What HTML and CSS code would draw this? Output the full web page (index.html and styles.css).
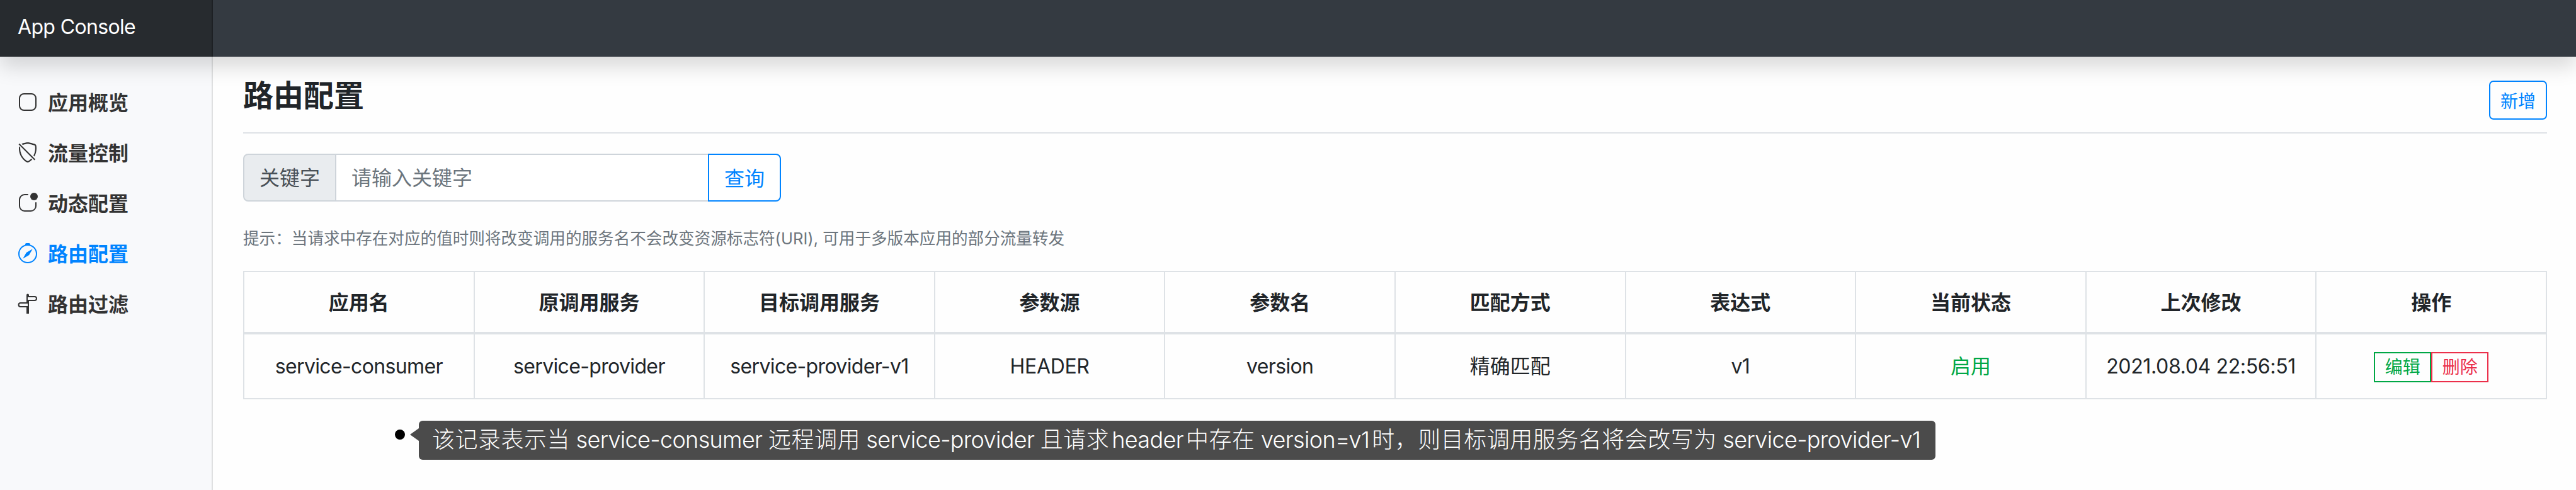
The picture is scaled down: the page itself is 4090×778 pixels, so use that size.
FILE: index.html
```html
<!DOCTYPE html>
<html lang="zh-CN">
<head>
<meta charset="utf-8">
<title>App Console</title>
<link rel="stylesheet" href="styles.css">
</head>
<body>
<header class="navbar"><a class="brand">App Console</a></header>
<div class="layout">
  <nav class="sidebar">
    <a class="nav-link"><svg class="icon" viewBox="0 0 16 16"><rect x="1.5" y="1.5" width="13" height="13" rx="3.5" fill="none" stroke="currentColor"/></svg><span>应用概览</span></a>
    <a class="nav-link"><svg class="icon" viewBox="0 0 16 16"><path d="M1.093 3.093c-.465 4.275.885 7.46 2.513 9.589a11.777 11.777 0 0 0 2.483 2.453c.386.273.744.482 1.048.625.28.132.581.24.829.24s.548-.108.829-.24a7.159 7.159 0 0 0 1.048-.625 11.32 11.32 0 0 0 1.733-1.525l-.745-.745a10.27 10.27 0 0 1-1.578 1.392c-.346.244-.652.42-.893.533-.12.057-.218.095-.293.118a.55.55 0 0 1-.101.025.615.615 0 0 1-.1-.025 2.348 2.348 0 0 1-.294-.118 6.141 6.141 0 0 1-.893-.533 10.725 10.725 0 0 1-2.287-2.233C3.053 10.228 1.879 7.594 2.06 4.06zM3.98 1.98l-.852-.852A58.935 58.935 0 0 1 5.072.559C6.157.266 7.31 0 8 0s1.843.265 2.928.56c1.11.3 2.229.655 2.887.87a1.54 1.54 0 0 1 1.044 1.262c.483 3.626-.332 6.491-1.551 8.616l-.77-.77c1.042-1.915 1.72-4.469 1.29-7.702a.48.48 0 0 0-.33-.39c-.65-.213-1.75-.56-2.836-.855C9.552 1.29 8.531 1.067 8 1.067c-.53 0-1.552.223-2.662.524A50.7 50.7 0 0 0 3.98 1.98z"/><path d="M13.35 14.2.75 1.6l.708-.708 12.6 12.6z"/></svg><span>流量控制</span></a>
    <a class="nav-link"><svg class="icon" viewBox="0 0 16 16"><path d="M5.5 2A3.5 3.5 0 0 0 2 5.5v5A3.5 3.5 0 0 0 5.5 14h5a3.5 3.5 0 0 0 3.5-3.5V8a.5.5 0 0 1 1 0v2.5a4.5 4.5 0 0 1-4.5 4.5h-5A4.5 4.5 0 0 1 1 10.5v-5A4.5 4.5 0 0 1 5.5 1H8a.5.5 0 0 1 0 1z"/><circle cx="13" cy="3" r="3"/></svg><span>动态配置</span></a>
    <a class="nav-link active"><svg class="icon" viewBox="0 0 16 16"><path d="M8 16.016a7.5 7.5 0 0 0 1.962-14.74A1 1 0 0 0 9 0H7a1 1 0 0 0-.962 1.276A7.5 7.5 0 0 0 8 16.016zm6.5-7.5a6.5 6.5 0 1 1-13 0 6.5 6.5 0 0 1 13 0z"/><path d="m6.94 7.44 4.95-2.83-2.83 4.95-4.949 2.83z"/></svg><span>路由配置</span></a>
    <a class="nav-link"><svg class="icon" viewBox="0 0 16 16"><path fill-rule="evenodd" d="M7 7V1.200a1 1 0 0 1 2 0V2h4.500a2 2 0 0 1 0 4H9v10H7v-5H2.300a2 2 0 0 1 0-4zM8 3v2h5.500a1 1 0 0 0 0-2zM8 8v2H2.300a1 1 0 0 1 0-2z"/></svg><span>路由过滤</span></a>
  </nav>
  <main class="content">
    <div class="page-head"><h1 class="title">路由配置</h1><button class="btn-new">新增</button></div>
    <div class="search"><span class="search-label">关键字</span><input class="search-input" placeholder="请输入关键字"><button class="search-btn">查询</button></div>
    <p class="hint">提示：当请求中存在对应的值时则将改变调用的服务名不会改变资源标志符(URI), 可用于多版本应用的部分流量转发</p>
    <table class="table">
      <thead><tr><th>应用名</th><th>原调用服务</th><th>目标调用服务</th><th>参数源</th><th>参数名</th><th>匹配方式</th><th>表达式</th><th>当前状态</th><th>上次修改</th><th>操作</th></tr></thead>
      <tbody><tr><td>service-consumer</td><td>service-provider</td><td>service-provider-v1</td><td class="wide">HEADER</td><td>version</td><td class="cjk">精确匹配</td><td>v1</td><td class="cjk enabled">启用</td><td class="wide">2021.08.04 22:56:51</td><td><div class="ops"><button class="op edit">编辑</button><button class="op remove">删除</button></div></td></tr></tbody>
    </table>
    <div class="note"><i class="dot"></i><i class="arrow"></i><div class="bubble">该记录表示当<span class="latin"> service-consumer </span>远程调用<span class="latin"> service-provider </span>且请求<span class="latin gap">header</span>中存在<span class="latin gap-end"> version=v1</span>时，则目标调用服务名将会改写为<span class="latin"> service-provider-v1</span></div></div>
  </main>
</div>
</body>
</html>
```
FILE: styles.css
```css
* { box-sizing: border-box; }
body { margin: 0; width: 4090px; height: 778px; overflow: hidden; background: #fefefe; color: #212529; font: 32px/48px Inter, "Noto Sans CJK SC", sans-serif; }
button, input { font-family: inherit; margin: 0; }
.navbar { position: relative; z-index: 2; height: 90px; background: #343a41; box-shadow: 0 16px 32px rgba(0,0,0,.15); }
.brand { display: flex; align-items: center; width: 338px; height: 90px; padding: 0 0 4px 28px; background: #272b2f; border-right: 2px solid #1d2024; color: #fff; letter-spacing: -.65px; }
.layout { display: flex; height: 688px; }
.sidebar { width: 338px; padding-top: 32px; background: #f8f9fb; border-right: 2px solid #dfe0e1; }
.nav-link { display: flex; align-items: center; gap: 16px; height: 80px; padding-left: 28px; color: #333; font-weight: 600; }
.nav-link span { padding-top: 3px; }
.nav-link.active { color: #0084ff; }
.icon { width: 32px; height: 32px; fill: currentColor; overflow: visible; }
.content { flex: 1; padding: 32px 46px 0 48px; }
.page-head { display: flex; justify-content: space-between; height: 90px; padding-top: 6px; border-bottom: 2px solid #dee2e6; }
.title { margin: 0; font-size: 48px; line-height: 48px; font-weight: 600; }
.btn-new { width: 92px; height: 62px; padding: 0; border: 2px solid #0084ff; border-radius: 7px; background: none; color: #0084ff; font-size: 28px; }
.search { display: flex; width: 854px; height: 76px; margin-top: 32px; }
.search-label { width: 148px; padding: 13px 24px 11px; border: 2px solid #ced4da; border-radius: 8px 0 0 8px; background: #e9ecef; color: #495057; }
.search-input { width: 594px; margin-left: -2px; padding: 0 24px; border: 2px solid #ced4da; background: #fff; font-size: 32px; }
.search-input::placeholder { color: #6c757d; opacity: 1; }
.search-btn { width: 116px; margin-left: -2px; padding: 0 0 2px; border: 2px solid #0084ff; border-radius: 0 8px 8px 0; background: #fff; color: #0084ff; font-size: 32px; }
.hint { margin: 37px 0 0; height: 73px; color: #6c757d; font-size: 25.6px; line-height: 44px; }
.table { width: 3658px; height: 204px; table-layout: fixed; border-collapse: collapse; text-align: center; }
.table th, .table td { padding: 0; border: 2px solid #dee2e6; }
.table th { height: 98px; padding-top: 3px; border-bottom-width: 4px; font-weight: 600; }
.table td { height: 103px; letter-spacing: -.65px; }
.table .wide { letter-spacing: -.35px; }
.table .cjk { letter-spacing: 0; }
.table .enabled { color: #00a745; }
.ops { display: flex; justify-content: center; margin-top: 2px; }
.op { width: 91px; height: 48px; padding: 0; border: 2px solid; background: none; font-size: 28px; line-height: 42px; }
.edit { color: #00a745; }
.remove { color: #eb2f4a; }
.note { display: flex; align-items: flex-start; margin: 34px 0 0 241px; }
.dot { width: 16px; height: 16px; margin-top: 14px; border-radius: 50%; background: #000; }
.arrow { margin: 12px 0 0 8px; border: solid transparent; border-width: 10px 14px 10px 0; border-right-color: #4b4b4b; }
.bubble { width: 2408px; height: 62px; padding: 0 0 0 21px; border-radius: 6px; background: #4b4b4b; color: #fff; font-size: 36px; line-height: 61px; letter-spacing: .5px; white-space: pre; font-weight: 300; }
.latin { letter-spacing: -.65px; }
.gap { margin: 0 4px; }
.gap-end { margin-right: 4px; }
```
